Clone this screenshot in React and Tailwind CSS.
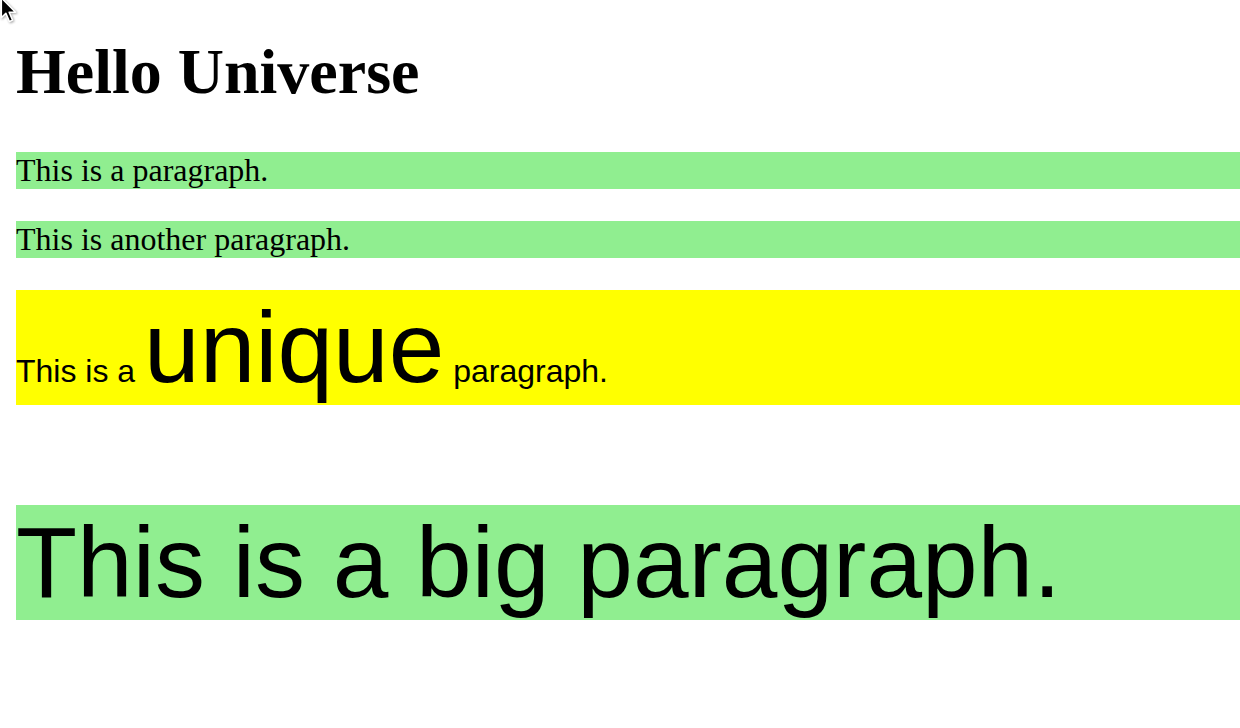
export default function App() {
  return (
    <div className="relative min-h-[728px] bg-white pl-[16px] pt-[35px] text-black">
      <svg
        className="absolute left-[-2px] top-[-4px] drop-shadow-[1px_1px_1px_rgba(0,0,0,0.35)]"
        width="26"
        height="32"
        viewBox="0 0 22 28"
      >
        <path
          d="M2.5 1.5 L2.5 19 L6.5 15.2 L9.6 22.3 L12.4 21.1 L9.4 14.2 L15 14.2 Z"
          fill="#000"
          stroke="#fff"
          strokeWidth="1.4"
          strokeLinejoin="round"
        />
      </svg>
      <h1 className="mb-[43px] font-['Liberation_Serif','Times_New_Roman',serif] text-[64px] font-bold leading-[1.15]">
        Hello Universe
      </h1>
      <p className="mb-[32px] bg-[#90ee90] font-['Liberation_Serif','Times_New_Roman',serif] text-[32px] leading-[37px]">
        This is a paragraph.
      </p>
      <p className="mb-[32px] bg-[#90ee90] font-['Liberation_Serif','Times_New_Roman',serif] text-[32px] leading-[37px]">
        This is another paragraph.
      </p>
      <p className="mb-[100px] bg-[#ffff00] font-['Liberation_Sans',Arial,sans-serif] text-[32px] leading-[1.15]">
        This is a <span className="text-[100px] leading-[1.15]">unique</span>{" "}
        paragraph.
      </p>
      <p className="bg-[#90ee90] font-['Liberation_Sans',Arial,sans-serif] text-[100px] leading-[115px]">
        This is a big paragraph.
      </p>
    </div>
  );
}
